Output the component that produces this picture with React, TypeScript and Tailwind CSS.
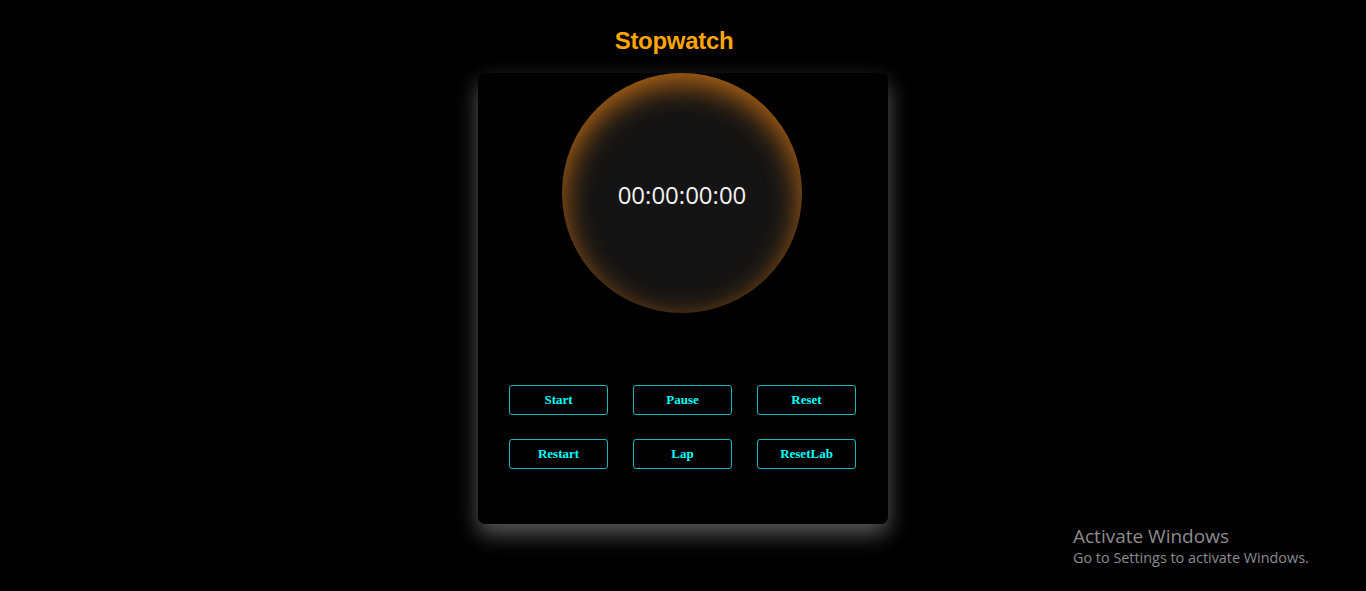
import { useEffect, useRef, useState } from 'react';

function fmt(ms: number) {
  const cs = Math.floor(ms / 10) % 100;
  const s = Math.floor(ms / 1000) % 60;
  const m = Math.floor(ms / 60000) % 60;
  const h = Math.floor(ms / 3600000);
  return [h, m, s, cs].map((n) => String(n).padStart(2, '0')).join(':');
}

const btn =
  'h-[30px] w-[99px] rounded-[3px] border border-[#13b5c0] bg-black text-[13px] font-bold text-[#00ffff] [font-family:"Liberation_Serif",serif]';

export default function App() {
  const [elapsed, setElapsed] = useState(0);
  const [running, setRunning] = useState(false);
  const [laps, setLaps] = useState<number[]>([]);
  const startRef = useRef(0);

  useEffect(() => {
    if (!running) return;
    startRef.current = Date.now() - elapsed;
    const id = setInterval(() => setElapsed(Date.now() - startRef.current), 10);
    return () => clearInterval(id);
  }, [running]);

  return (
    <div className="relative min-h-[591px] w-full overflow-hidden bg-black [font-family:'Liberation_Sans',Arial,sans-serif]">
      <div className="flex flex-col items-center pt-[26px]">
        <h1 className="mb-[18px] ml-[-18px] text-[24px] leading-[29px] font-bold tracking-[-0.3px] text-[#ffa500]">
          Stopwatch
        </h1>
        <div className="flex h-[451px] w-[410px] flex-col items-center rounded-[7px] bg-black shadow-[0_10px_22px_rgba(255,255,255,0.35)]">
          <div className="mr-[2px] flex h-[240px] w-[240px] items-center justify-center rounded-full bg-[#141414] shadow-[inset_0_10px_30px_rgba(255,140,20,0.7)]">
            <span className="mt-[4px] text-[24px] text-[#f2f2f2] [font-family:'Open_Sans',sans-serif]">
              {fmt(elapsed)}
            </span>
          </div>
          <div className="mt-[72px] mr-[1px] grid grid-cols-3 gap-x-[25px] gap-y-[24px]">
            <button className={btn} onClick={() => setRunning(true)}>Start</button>
            <button className={btn} onClick={() => setRunning(false)}>Pause</button>
            <button className={btn} onClick={() => { setRunning(false); setElapsed(0); }}>Reset</button>
            <button className={btn} onClick={() => { setElapsed(0); setRunning(true); }}>Restart</button>
            <button className={btn} onClick={() => setLaps([...laps, elapsed])}>Lap</button>
            <button className={btn} onClick={() => setLaps([])}>ResetLab</button>
          </div>
        </div>
      </div>
      <div className="absolute top-[524px] left-[1073px] text-[#8c8c8c] [font-family:'Open_Sans',sans-serif]">
        <p className="text-[19px] leading-[24px]">Activate Windows</p>
        <p className="text-[14.4px] leading-[20px]">Go to Settings to activate Windows.</p>
      </div>
    </div>
  );
}
